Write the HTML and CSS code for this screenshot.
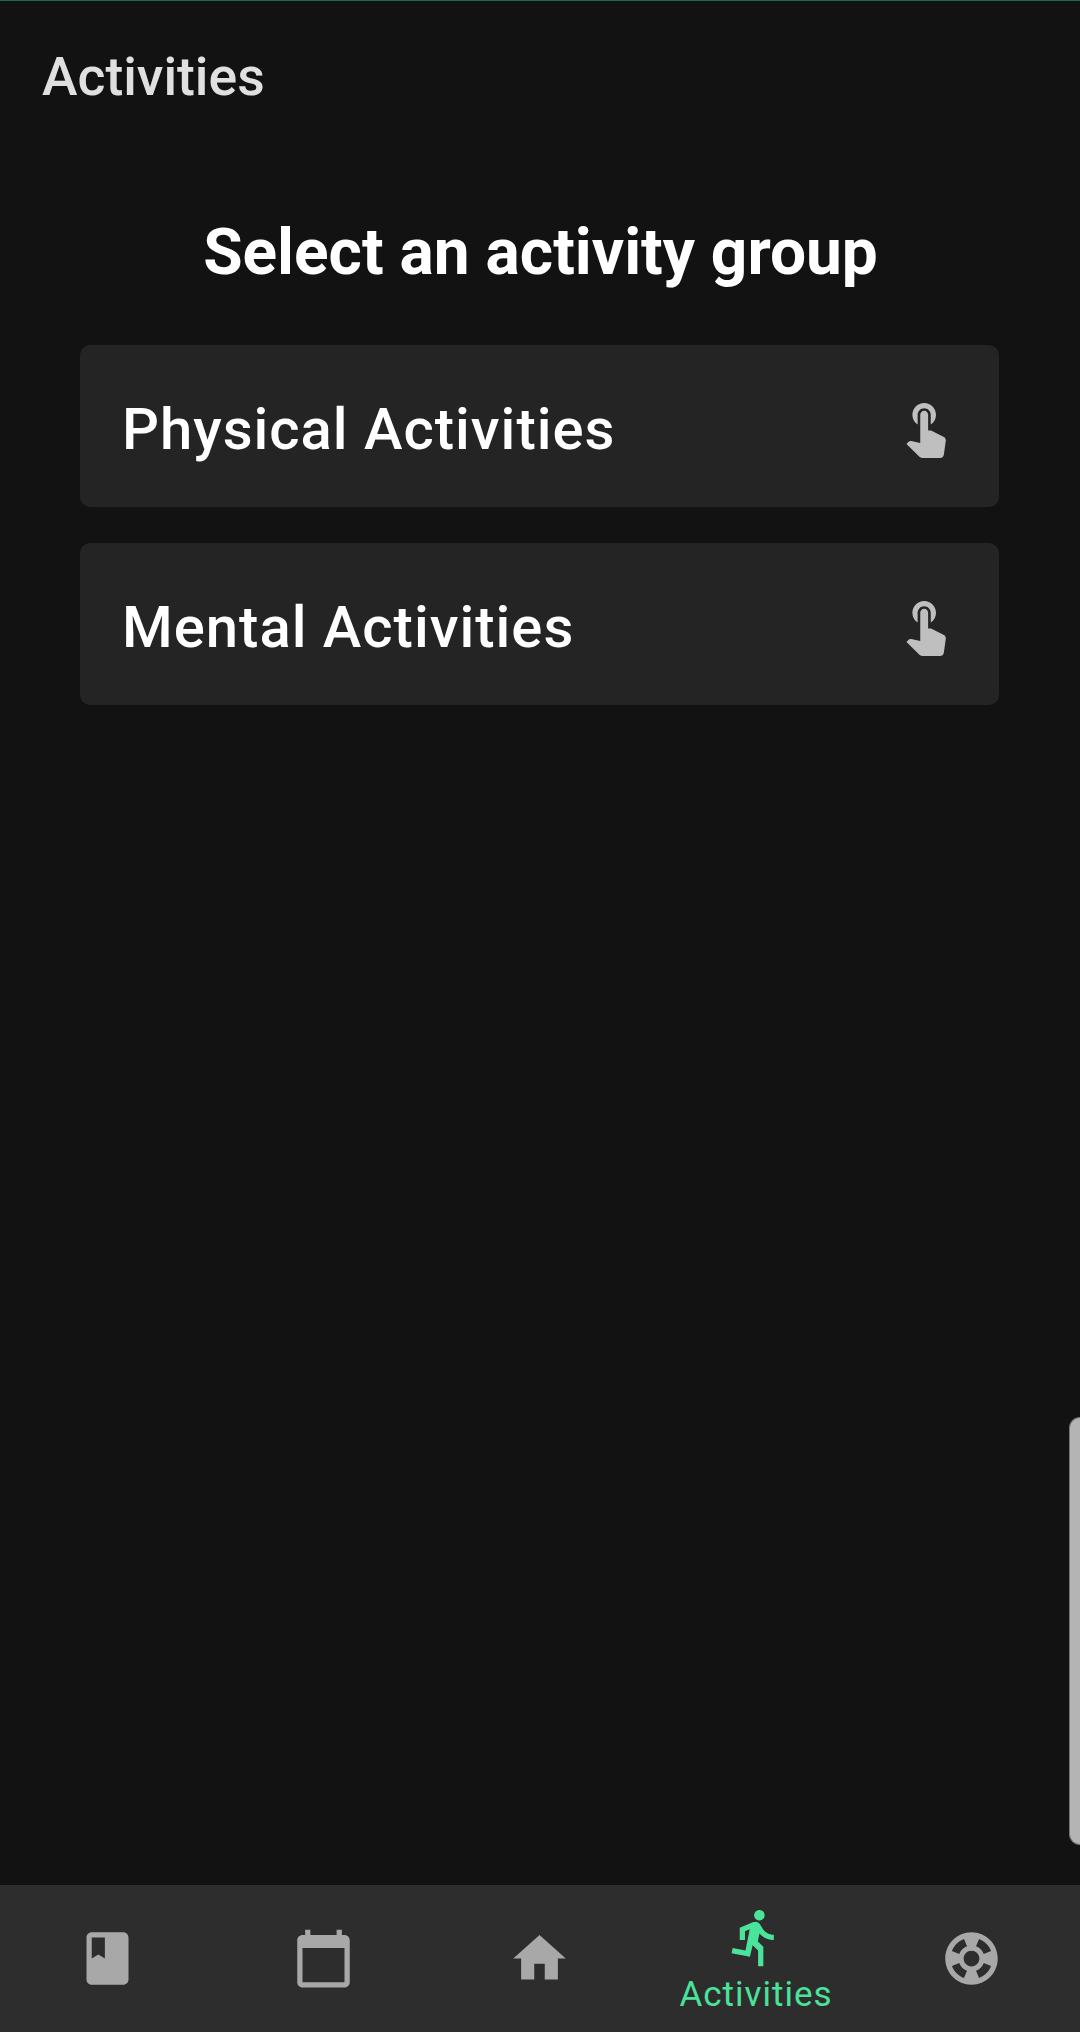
FILE: index.html
```html
<!DOCTYPE html>
<html lang="en">
<head>
    <meta charset="UTF-8">
    <meta name="viewport" content="width=device-width, initial-scale=1.0">
    <title>Activities</title>
    <link rel="stylesheet" href="styles.css">
</head>
<body>
    <div class="app">
        <header class="top-bar">
            <h1>Activities</h1>
        </header>

        <main class="content">
            <h2>Select an activity group</h2>
            <div class="group-list">
                <div class="group-card">
                    <span class="group-name">Physical Activities</span>
                    <svg class="touch-icon" viewBox="0 0 24 24"><path d="M9 11.24V7.5C9 6.12 10.12 5 11.5 5S14 6.12 14 7.5v3.74c1.21-.81 2-2.18 2-3.74C16 5.01 13.99 3 11.5 3S7 5.01 7 7.5c0 1.56.79 2.93 2 3.74zm9.84 4.63l-4.54-2.26c-.17-.07-.35-.11-.54-.11H13v-6c0-.83-.67-1.5-1.5-1.5S10 6.67 10 7.5v10.74l-3.43-.72c-.08-.01-.15-.03-.24-.03-.31 0-.59.13-.79.33l-.79.8 4.94 4.94c.27.27.65.44 1.06.44h6.79c.75 0 1.33-.55 1.44-1.28l.75-5.27c.01-.07.02-.14.02-.2 0-.62-.38-1.16-.91-1.38z"/></svg>
                </div>
                <div class="group-card">
                    <span class="group-name">Mental Activities</span>
                    <svg class="touch-icon" viewBox="0 0 24 24"><path d="M9 11.24V7.5C9 6.12 10.12 5 11.5 5S14 6.12 14 7.5v3.74c1.21-.81 2-2.18 2-3.74C16 5.01 13.99 3 11.5 3S7 5.01 7 7.5c0 1.56.79 2.93 2 3.74zm9.84 4.63l-4.54-2.26c-.17-.07-.35-.11-.54-.11H13v-6c0-.83-.67-1.5-1.5-1.5S10 6.67 10 7.5v10.74l-3.43-.72c-.08-.01-.15-.03-.24-.03-.31 0-.59.13-.79.33l-.79.8 4.94 4.94c.27.27.65.44 1.06.44h6.79c.75 0 1.33-.55 1.44-1.28l.75-5.27c.01-.07.02-.14.02-.2 0-.62-.38-1.16-.91-1.38z"/></svg>
                </div>
            </div>
        </main>

        <!-- Edge handle on the right -->
        <div class="edge-handle"></div>

        <nav class="tab-bar">
            <div class="tab">
                <svg class="tab-icon" viewBox="0 0 24 24"><path d="M18 2H6c-1.1 0-2 .9-2 2v16c0 1.1.9 2 2 2h12c1.1 0 2-.9 2-2V4c0-1.1-.9-2-2-2zM6 4h5v8l-2.5-1.5L6 12V4z"/></svg>
            </div>
            <div class="tab">
                <svg class="tab-icon" viewBox="0 0 24 24"><path d="M20 3h-1V1h-2v2H7V1H5v2H4c-1.1 0-2 .9-2 2v16c0 1.1.9 2 2 2h16c1.1 0 2-.9 2-2V5c0-1.1-.9-2-2-2zm0 18H4V8h16v13z"/></svg>
            </div>
            <div class="tab">
                <svg class="tab-icon" viewBox="0 0 24 24"><path d="M10 20v-6h4v6h5v-8h3L12 3 2 12h3v8z"/></svg>
            </div>
            <div class="tab tab-active">
                <svg class="tab-icon" viewBox="0 0 24 24"><path d="M13.49 5.48c1.1 0 2-.9 2-2s-.9-2-2-2-2 .9-2 2 .9 2 2 2zm-3.6 13.9l1-4.4 2.1 2v6h2v-7.5l-2.1-2 .6-3c1.3 1.5 3.3 2.5 5.5 2.5v-2c-1.9 0-3.5-1-4.3-2.4l-1-1.6c-.4-.6-1-1-1.7-1-.3 0-.5.1-.8.1l-5.2 2.2v4.7h2v-3.4l1.8-.7-1.6 8.1-4.9-1-.4 2 7 1.4z"/></svg>
                <span class="tab-label">Activities</span>
            </div>
            <div class="tab">
                <svg class="tab-icon" viewBox="0 0 24 24"><path d="M12 2C6.48 2 2 6.48 2 12s4.48 10 10 10 10-4.48 10-10S17.52 2 12 2zm7.46 7.12l-2.78 1.15c-.51-1.36-1.58-2.44-2.95-2.94l1.15-2.78c2.1.8 3.77 2.47 4.58 4.57zM12 15c-1.66 0-3-1.34-3-3s1.34-3 3-3 3 1.34 3 3-1.34 3-3 3zM9.13 4.54l1.17 2.78c-1.38.5-2.47 1.59-2.98 2.97L4.54 9.13c.81-2.11 2.48-3.78 4.59-4.59zM4.54 14.87l2.78-1.15c.51 1.38 1.59 2.46 2.97 2.96l-1.17 2.78c-2.1-.81-3.77-2.48-4.58-4.59zm10.34 4.59l-1.15-2.78c1.37-.51 2.45-1.59 2.95-2.97l2.78 1.17c-.81 2.1-2.48 3.77-4.58 4.58z"/></svg>
            </div>
        </nav>
    </div>
</body>
</html>
```

FILE: styles.css
```css
body, h1, h2 {
    margin: 0;
    padding: 0;
}

body {
    font-family: Roboto, Arial, sans-serif;
    background-color: #121212;
}

.app {
    position: relative;
    display: flex;
    flex-direction: column;
    height: 2032px;
    overflow: hidden;
    border-top: 1px solid #1f6b45;
    box-sizing: border-box;
}

.top-bar {
    padding: 46px 42px 0;
}

.top-bar h1 {
    font-size: 53.5px;
    line-height: 60px;
    font-weight: 500;
    color: #e0e0e0;
}

.content {
    flex: 1;
    padding: 0 81px 0 80px;
}

.content h2 {
    margin-top: 106px;
    padding-left: 2px;
    font-size: 64px;
    line-height: 80px;
    font-weight: 700;
    text-align: center;
    color: white;
}

.group-list {
    display: flex;
    flex-direction: column;
    gap: 36px;
    margin-top: 52px;
}

.group-card {
    display: flex;
    align-items: center;
    justify-content: space-between;
    height: 162px;
    padding: 0 42px;
    background-color: #242424;
    border-radius: 10px;
    font-size: 58px;
    font-weight: 500;
    letter-spacing: 1px;
    color: white;
}

.group-name {
    padding-top: 5px;
}

.touch-icon {
    width: 63px;
    height: 63px;
    fill: #bfbfbf;
}

.edge-handle {
    position: absolute;
    top: 1416px;
    right: 0;
    width: 10px;
    height: 426px;
    background-color: #b4b4b4;
    border: 1px solid #777;
    border-right: none;
    border-radius: 12px 0 0 12px;
}

.tab-bar {
    display: flex;
    height: 147px;
    background-color: #2d2d2d;
}

.tab {
    flex: 1;
    display: flex;
    flex-direction: column;
    align-items: center;
    justify-content: center;
}

.tab-icon {
    width: 63px;
    height: 63px;
    margin-left: -2px;
    fill: #a8a8a8;
}

.tab-active {
    justify-content: flex-start;
    padding-top: 21px;
}

.tab-active .tab-icon {
    fill: #4be29a;
}

.tab-label {
    margin-top: 6px;
    font-size: 35px;
    line-height: 40px;
    letter-spacing: 1px;
    color: #4be29a;
}
```
